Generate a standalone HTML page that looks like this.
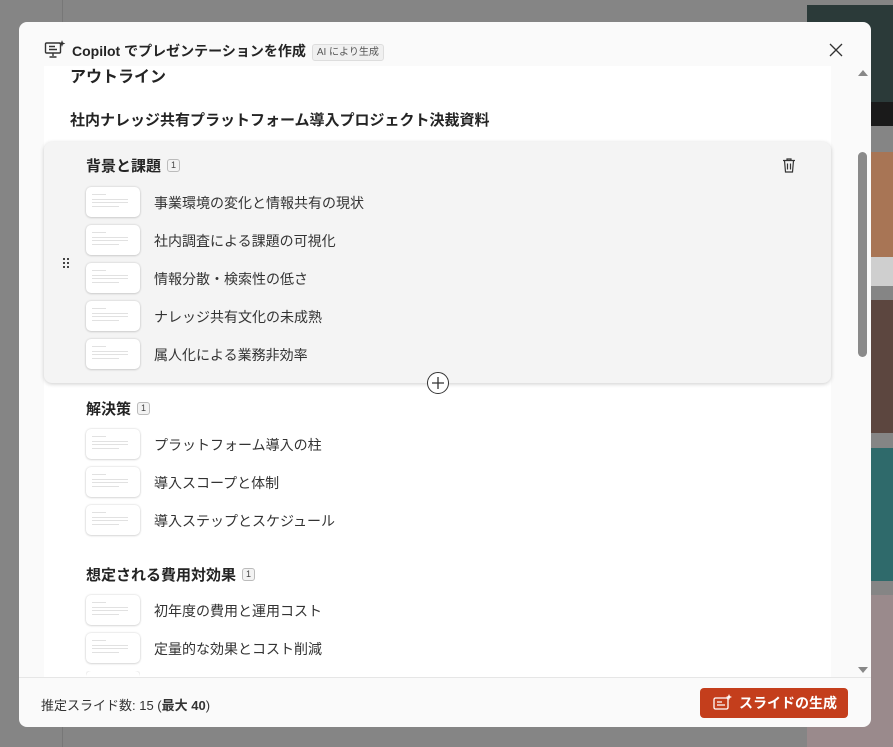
<!DOCTYPE html><html><head><meta charset="utf-8"><style>
*{box-sizing:border-box;margin:0;padding:0}
body{width:893px;height:747px;overflow:hidden;background:#858585;font-family:"Liberation Sans","Noto Sans CJK JP",sans-serif;color:#242424;position:relative}
.abs{position:absolute}
.dlg{left:19px;top:22px;width:852px;height:705px;background:#fafafa;border-radius:8px;overflow:hidden}
.panel{left:44px;top:66px;width:787px;height:611px;background:#fff;overflow:hidden}
.th{position:absolute;width:54px;height:30px;background:#fff;border-radius:5px;box-shadow:0 0 2px rgba(0,0,0,.18),0 1px 2px rgba(0,0,0,.1)}
.th i{position:absolute;left:6px;height:1px;background:#e1e1e1}
.row{position:absolute;font-size:14px;color:#333}
.h{position:absolute;font-size:15px;font-weight:bold;color:#242424}
.badge{display:inline-block;font-size:9px;font-weight:normal;border:1px solid #bbb;border-radius:3px;padding:0 3px;margin-left:6px;vertical-align:3px;line-height:11px;color:#444;background:#f3f3f3}
.dot{position:absolute;width:2px;height:2px;background:#444}
</style></head><body>
<div class="abs" style="left:62px;top:0;width:1px;height:747px;background:#777"></div>
<div class="abs" style="left:807px;top:5px;width:86px;height:97px;background:#2b3a39"></div>
<div class="abs" style="left:807px;top:102px;width:86px;height:24px;background:#1a1a1a"></div>
<div class="abs" style="left:807px;top:152px;width:86px;height:105px;background:#a87555"></div>
<div class="abs" style="left:807px;top:257px;width:86px;height:29px;background:#cfcfcf"></div>
<div class="abs" style="left:807px;top:300px;width:86px;height:133px;background:#5c463f"></div>
<div class="abs" style="left:807px;top:448px;width:86px;height:133px;background:#2f6a6b"></div>
<div class="abs" style="left:807px;top:595px;width:86px;height:152px;background:#9a8a8c"></div>
<div class="dlg abs">
<svg class="abs" style="left:25px;top:18px" width="22" height="20" viewBox="0 0 22 20" fill="none" stroke="#333" stroke-width="1.4"><rect x="1.5" y="3" width="15" height="10" rx="1"/><path d="M5 6.5h6M5 9.5h8M9 13v3M5.5 17h7"/><path d="M18 1l.7 1.8 1.8.7-1.8.7-.7 1.8-.7-1.8-1.8-.7 1.8-.7z" fill="#333" stroke-width=".6"/></svg>
<div class="abs" style="left:53px;top:19px;font-size:14px;font-weight:bold;color:#242424">Copilot でプレゼンテーションを作成<span class="badge" style="font-size:10px;padding:2px 4px;vertical-align:1px;color:#555;border-color:#ddd;background:#f0f0f0">AI により生成</span></div>
<svg class="abs" style="left:810px;top:21px" width="14" height="14" stroke="#333" stroke-width="1.3"><path d="M1 1l12 12M13 1L1 13"/></svg>
<div class="abs" style="left:839px;top:48px;width:0;height:0;border-left:5px solid transparent;border-right:5px solid transparent;border-bottom:6px solid #888"></div>
<div class="abs" style="left:839px;top:130px;width:9px;height:205px;background:#8a8a8a;border-radius:5px"></div>
<div class="abs" style="left:839px;top:645px;width:0;height:0;border-left:5px solid transparent;border-right:5px solid transparent;border-top:6px solid #888"></div>
<div class="abs" style="left:0;top:655px;width:852px;height:1px;background:#e6e6e6"></div>
<div class="abs" style="left:22px;top:673px;font-size:13px;color:#333">推定スライド数: 15 (<b>最大 40</b>)</div>
<div class="abs" style="left:681px;top:666px;width:148px;height:30px;background:#c43e1c;border-radius:4px;color:#fff;font-weight:bold;font-size:14px;line-height:30px;padding-left:39px">スライドの生成</div>
<svg class="abs" style="left:694px;top:672px" width="20" height="18" fill="none" stroke="#fff" stroke-width="1.3"><rect x="1" y="4" width="14" height="11" rx="1.5"/><path d="M4 8h5M4 11h8"/><path d="M16 0.5l.7 1.8 1.8.7-1.8.7-.7 1.8-.7-1.8-1.8-.7 1.8-.7z" fill="#fff" stroke-width=".5"/></svg>
</div>
<div class="panel abs">
<div class="h" style="left:26px;top:-3px;font-size:16px">アウトライン</div>
<div class="h" style="left:26px;top:43px;font-size:15px">社内ナレッジ共有プラットフォーム導入プロジェクト決裁資料</div>
</div>
<div class="abs" style="left:44px;top:142px;width:787px;height:241px;background:#f4f4f4;border-radius:8px;box-shadow:0 1px 4px rgba(0,0,0,.2)"></div>
<div class="dot" style="left:63px;top:258px"></div><div class="dot" style="left:67px;top:258px"></div>
<div class="dot" style="left:63px;top:262px"></div><div class="dot" style="left:67px;top:262px"></div>
<div class="dot" style="left:63px;top:266px"></div><div class="dot" style="left:67px;top:266px"></div>
<svg class="abs" style="left:781px;top:157px" width="16" height="17" fill="none" stroke="#333" stroke-width="1.2"><path d="M2 3.5h12M6 3.5V2h4v1.5M3.5 3.5l1 11.5h7l1-11.5M6.5 6.5v6M9.5 6.5v6"/></svg>
<div class="abs" style="left:427px;top:372px;width:22px;height:22px;border-radius:50%;background:#fff;border:1.3px solid #333"></div>
<svg class="abs" style="left:431px;top:376px" width="14" height="14" stroke="#333" stroke-width="1.3"><path d="M7 1v12M1 7h12"/></svg>
<div id="c"></div>
<script>
var d=[["背景と課題",165],[0,202,"事業環境の変化と情報共有の現状"],[0,240,"社内調査による課題の可視化"],[0,278,"情報分散・検索性の低さ"],[0,316,"ナレッジ共有文化の未成熟"],[0,354,"属人化による業務非効率"],["解決策",408],[0,444,"プラットフォーム導入の柱"],[0,482,"導入スコープと体制"],[0,520,"導入ステップとスケジュール"],["想定される費用対効果",574],[0,610,"初年度の費用と運用コスト"],[0,648,"定量的な効果とコスト削減"],[0,686,""]];
var h="";d.forEach(function(r){if(r[0]){h+='<div class="h" style="left:86px;top:'+(r[1]-10)+'px">'+r[0]+'<span class="badge">1</span></div>';}else{var top=r[1]-15;if(top+30>677){h+='<div class="abs" style="left:86px;top:'+top+'px;width:54px;height:'+(677-top)+'px;overflow:hidden"><div class="th" style="left:0;top:0"></div></div>';}else{h+='<div class="th" style="left:86px;top:'+top+'px"><i style="top:7px;width:14px"></i><i style="top:12px;width:36px"></i><i style="top:15px;width:36px"></i><i style="top:19px;width:27px"></i></div>';}h+='<div class="row" style="left:154px;top:'+(r[1]-9)+'px">'+r[2]+'</div>';}});
document.getElementById("c").innerHTML=h;
</script>
<div class="abs" style="left:19px;top:677px;width:852px;height:1px;background:#e6e6e6"></div>
</body></html>
